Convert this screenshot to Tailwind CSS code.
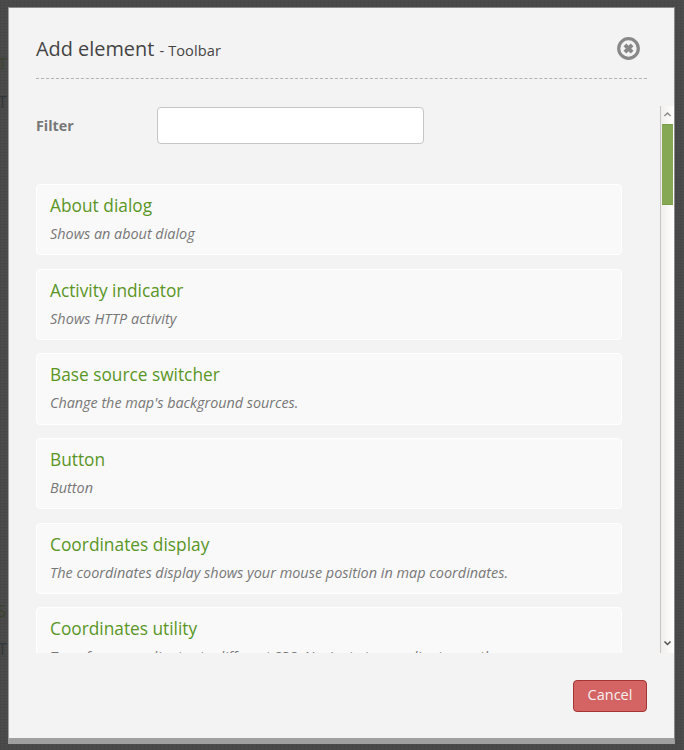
<!DOCTYPE html>
<html lang="en">
<head>
<meta charset="utf-8">
<title>Add element</title>
<script src="https://cdn.jsdelivr.net/npm/@tailwindcss/browser@4"></script>
</head>
<body class="relative h-[750px] w-[684px] overflow-hidden bg-[#4b4b4b] bg-[repeating-linear-gradient(0deg,rgba(0,0,0,0.05)_0px_1px,transparent_1px_3px),repeating-linear-gradient(90deg,rgba(0,0,0,0.035)_0px_1px,transparent_1px_4px)] pl-2 pt-[7px] font-['Open_Sans',sans-serif]">
  <span class="absolute left-[-2px] top-[52px] text-[16px] text-[#3a4430]">T</span>
  <span class="absolute left-[-2px] top-[90px] text-[16px] text-[#33373a]">T</span>
  <span class="absolute left-[-3px] top-[599px] text-[16px] text-[#37432a]">S</span>
  <span class="absolute left-[-2px] top-[637px] text-[16px] text-[#33373a]">T</span>
  <main class="relative flex h-[737px] w-[667px] flex-col border border-b-[6px] border-[#a0a0a0] border-t-[#8a8a8a] border-r-[#8a8a8a] bg-[#f3f3f3] pl-[27px]">
    <header class="flex h-[71px] w-[611px] items-start justify-between border-b border-dashed border-[#b2b2b2]">
      <h1 class="whitespace-pre pt-[27px] text-[19.9px] leading-[27px] text-[#444]">Add element <span class="text-[14.6px] tracking-[0.08px]">- Toolbar</span></h1>
      <svg class="mr-[7px] mt-[29px] size-[23px]" viewBox="0 0 23 23" fill="none">
        <circle cx="11.5" cy="11.5" r="9.8" stroke="#888" stroke-width="3.2"/>
        <path d="M7.9 7.9L15.1 15.1M15.1 7.9L7.9 15.1" stroke="#888" stroke-width="4"/>
      </svg>
    </header>
    <div class="mt-[27px] flex h-[547px]">
      <div class="w-[624px] overflow-hidden">
        <div class="flex h-[78px] items-start pt-px">
          <label class="w-[121px] pt-[9px] text-[14.3px] font-bold leading-[20px] text-[#777]">Filter</label>
          <div class="h-[37px] w-[267px] rounded-[4px] border border-[#c5c5c5] bg-white"></div>
        </div>
        <ul class="flex w-[586px] flex-col gap-[13.37px]">
          <li class="h-[71.3px] shrink-0 rounded-[4px] border border-white bg-[#f9f9f9] px-[13px] pt-[8px]"><div class="text-[17.3px] leading-[25px] tracking-[0.03px] text-[#5a9626]">About dialog</div><div class="whitespace-nowrap pt-[6px] text-[14.4px] italic leading-[20px] text-[#777]">Shows an about dialog</div></li>
          <li class="h-[71.3px] shrink-0 rounded-[4px] border border-white bg-[#f9f9f9] px-[13px] pt-[8px]"><div class="text-[17.3px] leading-[25px] text-[#5a9626]">Activity indicator</div><div class="whitespace-nowrap pt-[6px] text-[14.4px] italic leading-[20px] tracking-[0.1px] text-[#777]">Shows HTTP activity</div></li>
          <li class="h-[71.3px] shrink-0 rounded-[4px] border border-white bg-[#f9f9f9] px-[13px] pt-[8px]"><div class="text-[17.3px] leading-[25px] text-[#5a9626]">Base source switcher</div><div class="whitespace-nowrap pt-[6px] text-[14.35px] italic leading-[20px] text-[#777]">Change the map's background sources.</div></li>
          <li class="h-[71.3px] shrink-0 rounded-[4px] border border-white bg-[#f9f9f9] px-[13px] pt-[8px]"><div class="text-[17.3px] leading-[25px] text-[#5a9626]">Button</div><div class="whitespace-nowrap pt-[6px] text-[14.45px] italic leading-[20px] text-[#777]">Button</div></li>
          <li class="h-[71.3px] shrink-0 rounded-[4px] border border-white bg-[#f9f9f9] px-[13px] pt-[8px]"><div class="text-[17.35px] leading-[25px] text-[#5a9626]">Coordinates display</div><div class="whitespace-nowrap pt-[6px] text-[14.45px] italic leading-[20px] text-[#777]">The coordinates display shows your mouse position in map coordinates.</div></li>
          <li class="h-[71.3px] shrink-0 rounded-[4px] border border-white bg-[#f9f9f9] px-[13px] pt-[8px]"><div class="text-[17.3px] leading-[25px] text-[#5a9626]">Coordinates utility</div><div class="whitespace-nowrap pt-[6px] text-[14.45px] italic leading-[20px] text-[#777]">Transform coordinates to different SRS. Navigate to coordinates on the map.</div></li>
        </ul>
      </div>
      <div class="flex w-[14px] flex-col items-center border-l border-[#c8c4c0] bg-linear-to-r from-[#f0eeec] to-white">
        <svg class="h-[18px] w-[13px] shrink-0" viewBox="0 0 13 18" fill="none" stroke="#8c8c8c" stroke-width="1.5"><path d="M3.5 10L6.5 7L9.5 10"/></svg>
        <div class="h-[81px] w-[11px] shrink-0 border-y border-[#7a9e45] bg-[#86a753]"></div>
        <svg class="mt-auto h-[18px] w-[13px] shrink-0" viewBox="0 0 13 18" fill="none" stroke="#505050" stroke-width="1.5"><path d="M3.5 6.5L6.5 9.5L9.5 6.5"/></svg>
      </div>
    </div>
    <footer class="mt-[27px] flex w-[611px] justify-end">
      <button class="h-[32px] w-[74px] rounded-[4px] border border-[#a53434] bg-[#d46464] pb-[2px] text-[14.5px] leading-[20px] text-[#f5f0f0]">Cancel</button>
    </footer>
  </main>
</body>
</html>
